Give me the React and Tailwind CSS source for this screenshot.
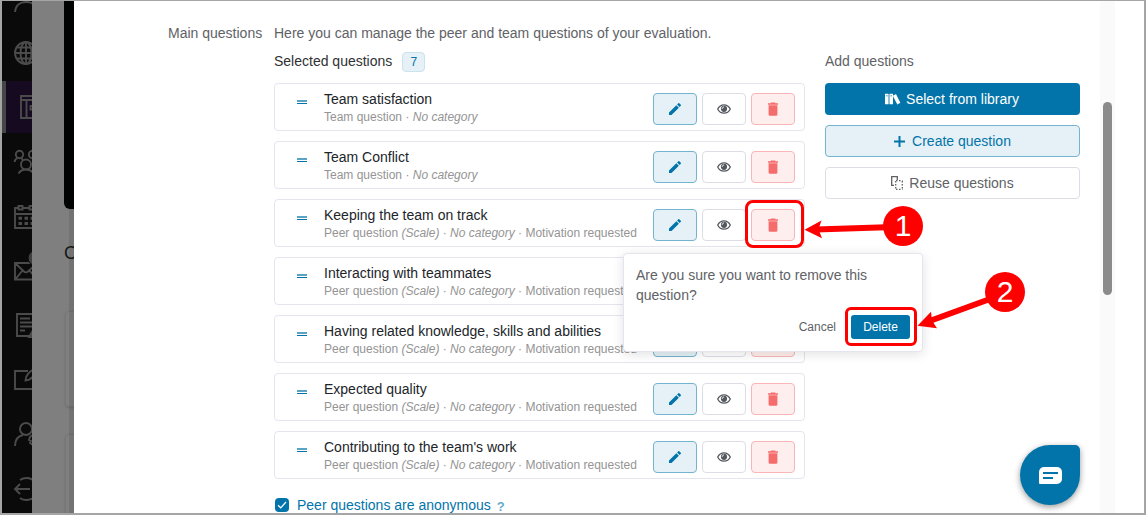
import { ImBooks } from "react-icons/im";
import { MdEdit } from "react-icons/md";

const questions = [
  { title: "Team satisfaction", type: "Team question" },
  { title: "Team Conflict", type: "Team question" },
  { title: "Keeping the team on track", type: "Peer question", scale: true },
  { title: "Interacting with teammates", type: "Peer question", scale: true },
  { title: "Having related knowledge, skills and abilities", type: "Peer question", scale: true },
  { title: "Expected quality", type: "Peer question", scale: true },
  { title: "Contributing to the team's work", type: "Peer question", scale: true },
];

const navIcons = [
  // Account
  <path key="account" d="M1 25c.5-6.500 5-10 11-10s10.500 3.500 11 10" />,
  // Globe
  <g key="globe">
    <circle cx="12" cy="12" r="11" />
    <ellipse cx="12" cy="12" rx="5.500" ry="11" />
    <path d="M12 1v22M1 12h22M3 6.500h18M3 17.500h18" />
  </g>,
  // Courses
  <g key="courses">
    <path d="M1 1h20v22H1zM1 5h20M6.500 5v18" />
    <path d="M18 11h-7.500v3.500H18" />
  </g>,
  // Groups
  <g key="groups">
    <circle cx="5.500" cy="4.500" r="3.700" />
    <circle cx="18.500" cy="4.500" r="3.700" />
    <circle cx="12" cy="14.500" r="5" />
    <path d="M.5 12c.3-2 1.500-3.300 3-3.800M7.500 8.200l1.500 2M23.500 12c-.3-2-1.500-3.300-3-3.800M4.500 23.500c1.500-2.500 4-4 7.500-4s6 1.500 7.500 4" />
  </g>,
  // Calendar
  <g key="calendar">
    <path d="M4 3H1v20h22V3h-3M1 9h22M9 3h6" />
    <path d="M4.500 1h4v3.500h-4zM15.500 1h4v3.500h-4z" />
    <path d="M4.500 13.200h3.500M10.500 13.200h3.500M16.500 13.200h3.500M4.500 18.500h3.500M10.500 18.500h3.500M16.500 18.500h3.500" strokeWidth="3" />
  </g>,
  // Inbox
  <g key="inbox">
    <path d="M1 4h22v16.500H1zM1 4l9 8.500c1 1 3 1 4 0L23 4M2 19.500l6.500-8M22 19.500l-6.500-8" />
    <circle cx="21.500" cy="-1" r="7.500" fill="#404040" stroke="#0a0a0a" strokeWidth="1" />
  </g>,
  // History
  <g key="history">
    <path d="M15 23H3V1h16v14M6 5.500h10M6 9.500h12M6 13.500h12M6 17.500h5" />
    <path d="M18 19l-3 5h6z" fill="#4b4b4b" />
  </g>,
  // Studio
  <g key="studio">
    <path d="M14 3H1v18h20v-8" />
    <path d="M21 1c-5 2-9 6-9.500 11.500 5-.5 8-3.500 10-8" />
  </g>,
  // Admin
  <g key="admin">
    <circle cx="12" cy="7" r="6" />
    <path d="M1 24c0-6 3-10 8-11M17 14l2-1 2 1 2 2-1 6-3 1-3-2 1-2-2-1 1-3z" />
  </g>,
  // Collapse
  <g key="collapse">
    <path d="M1 12h15M6 7l-5 5 5 5M6 3c4-3 10-2.500 13 0M6 21c4 3 10 2.500 13 0" />
  </g>,
];

function Sidebar() {
  return (
    <nav className="-mt-[29px] flex w-[30px] shrink-0 flex-col gap-[2.400px] overflow-hidden bg-[#0a0a0a]">
      {navIcons.map((icon, i) => (
        <div
          key={i}
          className={
            i === 2
              ? "flex h-[52px] shrink-0 items-center border-l-4 border-[#454745] bg-[#150a20] pl-[14px]"
              : "flex h-[52px] shrink-0 items-center pl-3 pt-0.5"
          }
        >
          <svg
            width="24"
            height="24"
            viewBox="0 0 24 24"
            className="shrink-0 overflow-visible"
            fill="none"
            stroke="#4b4b4b"
            strokeWidth="1.900"
          >
            {icon}
          </svg>
        </div>
      ))}
    </nav>
  );
}

// Dimmed page behind the dialog
function Backdrop() {
  return (
    <div className="relative flex w-[42px] shrink-0 flex-col overflow-hidden bg-[#7f7f7f] pl-8">
      <div className="z-10 h-[208px] w-6 shrink-0 rounded-bl-md bg-[#010303]" />
      <div className="z-10 mt-8 h-6 text-[18px] leading-6 text-[#161616]">C</div>
      <div className="ml-px mt-[46px] h-[96px] w-10 shrink-0 rounded-sm border border-[#777] bg-[#808080] shadow" />
      <div className="ml-px mt-[27px] h-[96px] w-10 shrink-0 rounded-sm border border-[#777] bg-[#808080] shadow" />
      <div className="absolute inset-y-0 right-0 w-[5px] bg-black/10" />
    </div>
  );
}

function EyeIcon() {
  return (
    <svg width="14" height="10" viewBox="0 0 14 10" fill="none" stroke="currentColor">
      <path d="M.7 5C2 2.400 4.300.8 7 .8S12 2.400 13.300 5C12 7.600 9.700 9.200 7 9.200S2 7.600.7 5z" strokeWidth="1.300" />
      <circle cx="7" cy="4.800" r="3.100" fill="currentColor" stroke="none" />
      <path d="M5.200 4.800C5.200 3.700 6 3 7 3" stroke="white" strokeWidth="1" />
    </svg>
  );
}

function TrashIcon() {
  return (
    <svg width="10" height="14" viewBox="0 0 10 14" fill="currentColor">
      <path d="M3 .5h4l.6.7H10v1.500H0V1.200h2.400zM.6 3.300h8.800v9.200a1.300 1.300 0 0 1-1.300 1.300H1.900a1.300 1.300 0 0 1-1.300-1.300z" />
    </svg>
  );
}

function QuestionRow({ question }) {
  return (
    <li className="flex h-12 items-center rounded border border-[#e4e5ee] pl-[22px] pr-[9px]">
      <div className="-mt-2.5 mr-[17px] flex w-[10px] flex-col gap-px">
        <span className="h-[2px] bg-[#5ba3c3]" />
        <span className="h-px bg-[#0374a9]" />
      </div>
      <div className="flex-1 whitespace-nowrap pt-px">
        <p className="text-sm leading-[18px] text-[#212529]">{question.title}</p>
        <p className="text-xs leading-[18px] text-[#949494]">
          {question.type}
          {question.scale && <em> (Scale)</em>} · <em>No category</em>
          {question.scale && " · Motivation requested"}
        </p>
      </div>
      <div className="mt-1 flex gap-[5px]">
        <button className="flex h-8 w-11 items-center justify-center rounded border border-[#73b4d1] bg-[#e5f1f6] text-[#0374a9]">
          <MdEdit size={16} />
        </button>
        <button className="flex h-8 w-11 items-center justify-center rounded border border-[#dcdde6] bg-white text-[#54585f]">
          <EyeIcon />
        </button>
        <button className="flex h-8 w-11 items-center justify-center rounded border border-[#fab6b6] bg-[#ffeeee] text-[#f56c6c]">
          <TrashIcon />
        </button>
      </div>
    </li>
  );
}

function AddQuestions() {
  return (
    <aside className="ml-5 w-[255px] pt-7">
      <h3 className="mb-3 text-sm leading-5 text-[#606266]">Add questions</h3>
      <div className="flex flex-col gap-2.5 text-sm">
        <button className="flex h-8 items-center justify-center gap-[5px] rounded bg-[#0374a9] pr-px text-white">
          <ImBooks size={16} />
          Select from library
        </button>
        <button className="flex h-8 items-center justify-center gap-[7px] rounded border border-[#73b4d1] bg-[#e5f1f6] text-[#0374a9]">
          <svg width="11" height="11" viewBox="0 0 11 11" stroke="currentColor" strokeWidth="2">
            <path d="M5.500 0v11M0 5.500h11" />
          </svg>
          Create question
        </button>
        <button className="flex h-8 items-center justify-center gap-[6px] rounded border border-[#dcdde6] bg-white text-[#606266]">
          <svg width="12" height="14" viewBox="0 0 12 14" fill="none" stroke="currentColor" strokeWidth="1.300">
            <path d="M3 9.400H.7V.7h5.600v3.300" />
            <path d="M5 4.700h6.500M5 13.300h6.500M4.700 5v8M11.300 5v8" strokeDasharray="1.500 1.500" />
          </svg>
          Reuse questions
        </button>
      </div>
    </aside>
  );
}

function ConfirmPopover() {
  return (
    <div className="absolute left-[623px] top-[253px] h-[99px] w-[300px] rounded border border-[#e4e5ee] bg-white px-3 py-[11px] shadow-[0_2px_12px_rgba(0,0,0,0.12)]">
      <p className="text-sm leading-5 text-[#606266]">
        Are you sure you want to remove this question?
      </p>
      <div className="mt-[10px] flex items-center justify-end gap-[15px] text-xs">
        <button className="text-[#606266]">Cancel</button>
        <button className="h-6 w-[59px] rounded-[3px] bg-[#0374a9] text-white">Delete</button>
      </div>
    </div>
  );
}

// Red highlight boxes and numbered arrows
function Annotations() {
  return (
    <>
      <div className="absolute left-[745px] top-[200px] h-12 w-[59px] rounded-lg border-[3px] border-[#fe0000]" />
      <div className="absolute left-[845px] top-[307px] h-[39px] w-[72px] rounded-md border-[3px] border-[#fe0000]" />
      <svg className="absolute left-[800px] top-[200px]" width="240" height="140" viewBox="800 200 240 140" fill="#fe0000">
        <path d="M886 227.300L816 229.400" stroke="#fe0000" strokeWidth="6" />
        <path d="M804.500 229.700L821.500 220.500L818.500 229.300L822 238.300z" />
        <path d="M990 299L929 321.200" stroke="#fe0000" strokeWidth="6" />
        <path d="M917.500 325.700L931 311.700L932 320.500L937 328.300z" />
      </svg>
      <div className="absolute left-[883px] top-[206px] flex size-10 items-center justify-center rounded-full bg-[#fe0000] text-[30px] leading-none text-white">
        1
      </div>
      <div className="absolute left-[985px] top-[272px] flex size-10 items-center justify-center rounded-full bg-[#fe0000] text-[30px] leading-none text-white">
        2
      </div>
    </>
  );
}

export default function App() {
  return (
    <div className="relative h-[515px] w-[1146px] overflow-hidden font-['Liberation_Sans',Arial,sans-serif]">
      <div className="flex h-full overflow-hidden border-2 border-t border-[#a5a5a5] bg-white">
        <Sidebar />
        <Backdrop />
        <main className="flex flex-1 pl-[94px] pt-[22px]">
          <div className="w-[106px] shrink-0 text-sm leading-5 text-[#606266]">Main questions</div>
          <section className="w-[531px] shrink-0">
            <p className="whitespace-nowrap text-sm leading-5 text-[#606266]">
              Here you can manage the peer and team questions of your evaluation.
            </p>
            <div className="mb-[11px] mt-[9px] flex h-5 items-center text-sm text-[#303133]">
              <span className="-mt-0.5">Selected questions</span>
              <span className="ml-[10px] flex h-5 w-[23px] items-center justify-center rounded border border-[#cbe3ee] bg-[#e5f1f6] text-xs text-[#0374a9]">
                7
              </span>
            </div>
            <ul className="flex flex-col gap-2.5">
              {questions.map((q) => (
                <QuestionRow key={q.title} question={q} />
              ))}
            </ul>
            <label className="mt-4 flex items-center whitespace-nowrap pl-px text-sm text-[#0374a9]">
              <span className="mr-2 flex size-[14px] items-center justify-center rounded-sm bg-[#0374a9]">
                <svg width="10" height="10" viewBox="0 0 10 10" fill="none" stroke="white" strokeWidth="1.200">
                  <path d="M1 5.300l2.700 2.500L9 2" />
                </svg>
              </span>
              Peer questions are anonymous
              <span className="ml-[6px] mt-1 text-[13px] font-bold leading-4 text-[#67acca]">?</span>
            </label>
          </section>
          <AddQuestions />
          <div className="-mt-[22px] ml-5 w-[15px] bg-[#fafafa] pl-[3px] pt-[101px]">
            <div className="h-[193px] w-[9px] rounded-full bg-[#8b8b8b]" />
          </div>
        </main>
      </div>

      <ConfirmPopover />

      <button className="absolute left-[1020px] top-[445px] flex size-[60px] items-center justify-center rounded-[30px_5px_30px_30px] bg-[#0374a9] shadow-[0_2px_6px_rgba(0,0,0,0.4)]">
        <svg width="23" height="17" viewBox="0 0 23 17" className="mt-px">
          <path d="M5 0h13a5 5 0 0 1 5 5v7a5 5 0 0 1-5 5H1a1 1 0 0 1-1-1V5a5 5 0 0 1 5-5z" fill="white" />
          <path d="M4 6h15M4 11h10" stroke="#0374a9" strokeWidth="1.800" />
        </svg>
      </button>

      <Annotations />
    </div>
  );
}
